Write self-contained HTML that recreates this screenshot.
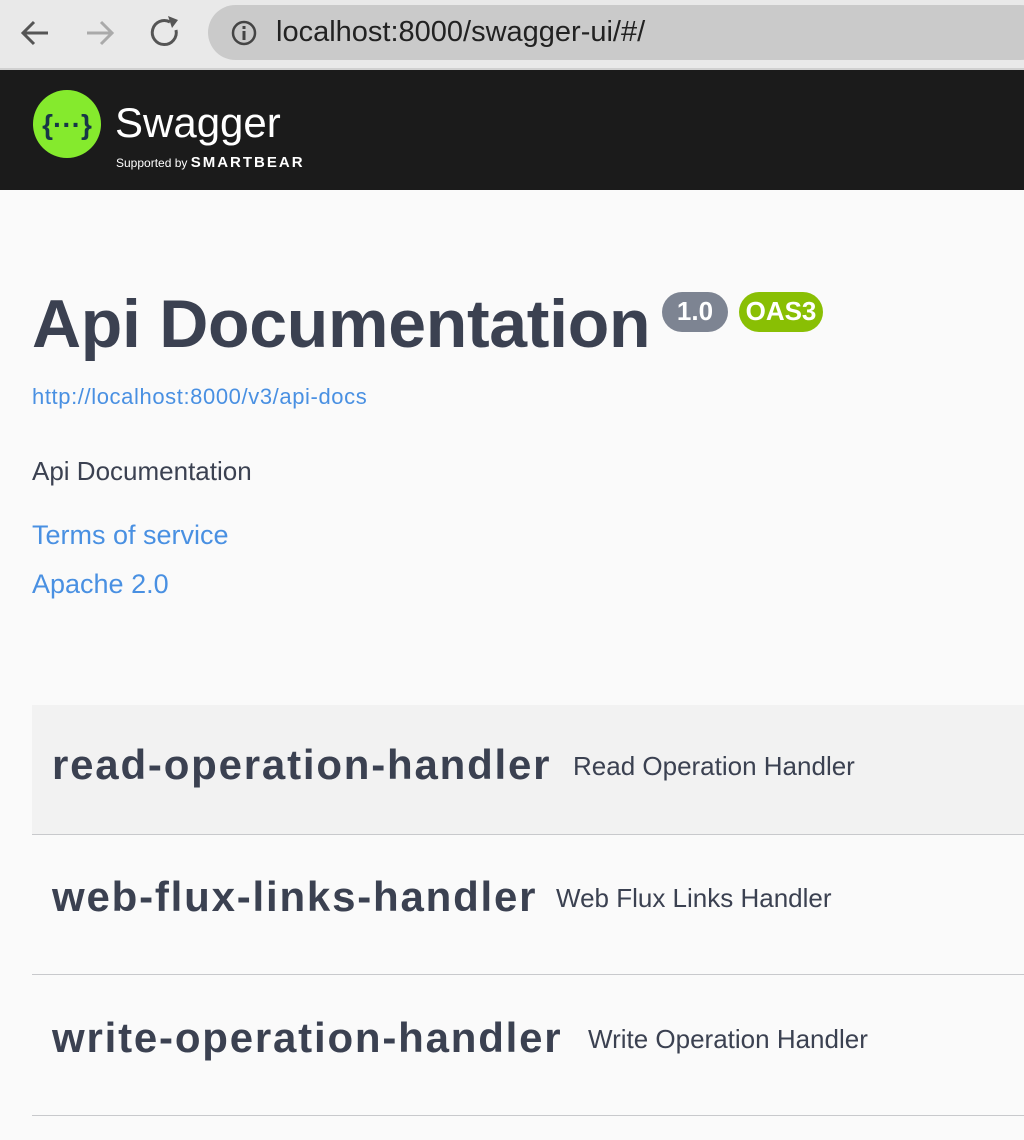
<!DOCTYPE html>
<html><head><style>
body{margin:0;width:1024px;height:1140px;overflow:hidden;background:#fafafa;font-family:"Liberation Sans",sans-serif;color:#3b4151}
.bar{position:absolute;top:0;left:0;width:1024px;height:68px;background:#e9e9e9;border-bottom:2px solid #d0d0d0}
.pill{position:absolute;left:208px;top:5px;width:840px;height:55px;border-radius:28px;background:#cacaca}
.url{position:absolute;left:276px;top:16px;font-size:29px;color:#222}
.hdr{position:absolute;top:70px;left:0;width:1024px;height:120px;background:#1b1b1b}
a{color:#4990e2;text-decoration:none}
.tag{position:absolute;left:32px;width:992px;height:139px;border-bottom:1px solid #c8c9cc}
.tag b{position:absolute;left:20px;top:38px;font-size:42px;letter-spacing:1.8px;color:#3b4151}
.tag span{position:absolute;top:48px;font-size:26px}
</style></head><body>
<div class="bar">
<svg width="200" height="68" style="position:absolute;left:0;top:0">
<path d="M48 33H24M34 22L23 33L34 44" stroke="#555" stroke-width="3" fill="none"/>
<path d="M87 33H111M101 22L112 33L101 44" stroke="#aaa" stroke-width="3" fill="none"/>
<path d="M176 30A12 12 0 1 1 170 22" stroke="#555" stroke-width="3" fill="none"/><path d="M168 16L178 20L172 28Z" fill="#555"/>
</svg>
<div class="pill"></div>
<svg width="30" height="30" style="position:absolute;left:230px;top:19px"><circle cx="14" cy="14" r="11" stroke="#444" stroke-width="2.5" fill="none"/><rect x="12.5" y="12" width="3" height="9" fill="#444"/><rect x="12.5" y="7" width="3" height="3" fill="#444"/></svg>
<div class="url">localhost:8000/swagger-ui/#/</div>
</div>
<div class="hdr">
<svg width="72" height="72" style="position:absolute;left:31px;top:19px"><ellipse cx="36" cy="35" rx="34" ry="34" fill="#85ea2d"/>
<text x="36" y="45" font-size="28" font-weight="bold" fill="#173647" text-anchor="middle" font-family="Liberation Sans">{···}</text></svg>
<div style="position:absolute;left:115px;top:29px;font-size:42px;color:#fff">Swagger</div>
<div style="position:absolute;left:116px;top:84px;font-size:12px;color:#fff">Supported by <span style="font-size:15px;font-weight:bold;letter-spacing:2px">SMARTBEAR</span></div>
</div>
<div style="position:absolute;left:32px;top:285px;font-size:68px;font-weight:bold;color:#3b4151;letter-spacing:-0.3px">Api Documentation</div>
<div style="position:absolute;left:662px;top:292px;width:66px;height:40px;border-radius:20px;background:#7d8492;color:#fff;font-size:26px;font-weight:bold;text-align:center;line-height:38px">1.0</div>
<div style="position:absolute;left:739px;top:292px;width:84px;height:40px;border-radius:20px;background:#89bf04;color:#fff;font-size:26px;font-weight:bold;text-align:center;line-height:38px">OAS3</div>
<a style="position:absolute;left:32px;top:384px;font-size:22px;letter-spacing:0.6px">http://localhost:8000/v3/api-docs</a>
<div style="position:absolute;left:32px;top:456px;font-size:26px">Api Documentation</div>
<a style="position:absolute;left:32px;top:520px;font-size:27px">Terms of service</a>
<a style="position:absolute;left:32px;top:569px;font-size:27px">Apache 2.0</a>
<div class="tag" style="top:705px;height:129px;background:#f2f2f2"><b style="top:36px">read-operation-handler</b><span style="left:541px;top:46px">Read Operation Handler</span></div>
<div class="tag" style="top:835px"><b>web-flux-links-handler</b><span style="left:524px">Web Flux Links Handler</span></div>
<div class="tag" style="top:976px"><b>write-operation-handler</b><span style="left:556px">Write Operation Handler</span></div>
</body></html>
